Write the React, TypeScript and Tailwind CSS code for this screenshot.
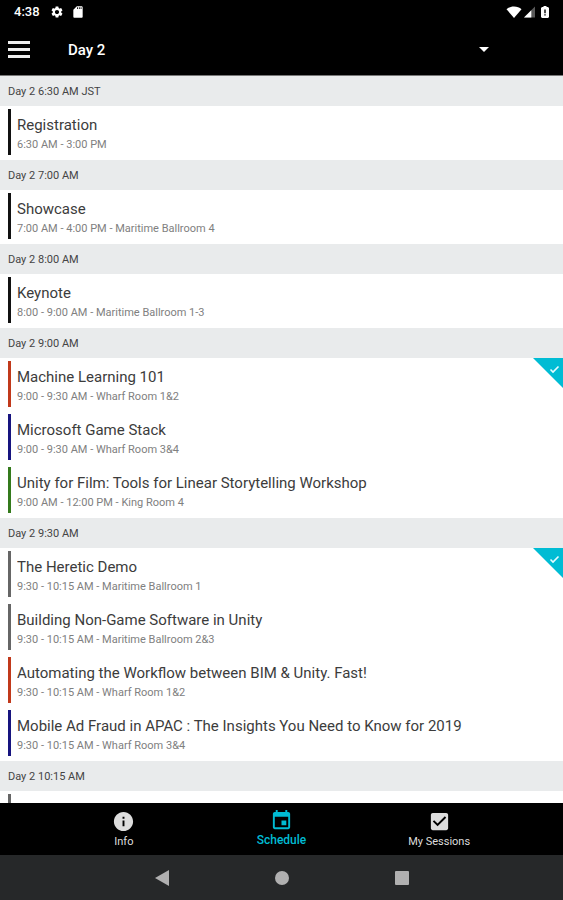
import { useState } from 'react';

type Session = { title: string; detail: string; bar: string; saved?: boolean };
type Slot = { time: string; sessions: Session[] };

const slots: Slot[] = [
  {
    time: 'Day 2 6:30 AM JST',
    sessions: [{ title: 'Registration', detail: '6:30 AM - 3:00 PM', bar: 'bg-[#111111]' }],
  },
  {
    time: 'Day 2 7:00 AM',
    sessions: [{ title: 'Showcase', detail: '7:00 AM - 4:00 PM - Maritime Ballroom 4', bar: 'bg-[#111111]' }],
  },
  {
    time: 'Day 2 8:00 AM',
    sessions: [{ title: 'Keynote', detail: '8:00 - 9:00 AM - Maritime Ballroom 1-3', bar: 'bg-[#111111]' }],
  },
  {
    time: 'Day 2 9:00 AM',
    sessions: [
      { title: 'Machine Learning 101', detail: '9:00 - 9:30 AM - Wharf Room 1&2', bar: 'bg-[#c1391b]', saved: true },
      { title: 'Microsoft Game Stack', detail: '9:00 - 9:30 AM - Wharf Room 3&4', bar: 'bg-[#17147f]' },
      {
        title: 'Unity for Film: Tools for Linear Storytelling Workshop',
        detail: '9:00 AM - 12:00 PM - King Room 4',
        bar: 'bg-[#347a1c]',
      },
    ],
  },
  {
    time: 'Day 2 9:30 AM',
    sessions: [
      { title: 'The Heretic Demo', detail: '9:30 - 10:15 AM - Maritime Ballroom 1', bar: 'bg-[#666666]', saved: true },
      { title: 'Building Non-Game Software in Unity', detail: '9:30 - 10:15 AM - Maritime Ballroom 2&3', bar: 'bg-[#666666]' },
      {
        title: 'Automating the Workflow between BIM & Unity. Fast!',
        detail: '9:30 - 10:15 AM - Wharf Room 1&2',
        bar: 'bg-[#c1391b]',
      },
      {
        title: 'Mobile Ad Fraud in APAC : The Insights You Need to Know for 2019',
        detail: '9:30 - 10:15 AM - Wharf Room 3&4',
        bar: 'bg-[#17147f]',
      },
    ],
  },
  {
    time: 'Day 2 10:15 AM',
    sessions: [{ title: '', detail: '', bar: 'bg-[#666666]' }],
  },
];

function StatusBar() {
  return (
    <div className="flex h-6 shrink-0 items-center pr-3.5 pl-3.5 text-white">
      <span className="text-[13px] font-medium">4:38</span>
      <svg className="ml-2.5 size-3.5" viewBox="0 0 24 24" fill="currentColor" aria-hidden="true">
        <path d="M19.14 12.94c.04-.3.06-.61.06-.94 0-.32-.02-.64-.07-.94l2.03-1.58a.49.49 0 0 0 .12-.61l-1.92-3.32a.488.488 0 0 0-.59-.22l-2.39.96c-.5-.38-1.03-.7-1.62-.94l-.36-2.54a.484.484 0 0 0-.48-.41h-3.84c-.24 0-.43.17-.47.41l-.36 2.54c-.59.24-1.13.57-1.62.94l-2.39-.96c-.22-.08-.47 0-.59.22L2.74 8.87c-.12.21-.08.47.12.61l2.03 1.58c-.05.3-.09.63-.09.94s.02.64.07.94l-2.03 1.58a.49.49 0 0 0-.12.61l1.92 3.32c.12.22.37.29.59.22l2.39-.96c.5.38 1.03.7 1.62.94l.36 2.54c.05.24.24.41.48.41h3.84c.24 0 .44-.17.47-.41l.36-2.54c.59-.24 1.13-.56 1.62-.94l2.39.96c.22.08.47 0 .59-.22l1.92-3.32c.12-.22.07-.47-.12-.61l-2.01-1.58zM12 15.6c-1.98 0-3.6-1.62-3.6-3.6s1.62-3.6 3.6-3.6 3.6 1.62 3.6 3.6-1.62 3.6-3.6 3.6z" />
      </svg>
      <svg className="ml-[7px] size-3.5" viewBox="0 0 24 24" fill="currentColor" aria-hidden="true">
        <path d="M18 2h-8L4 8v12c0 1.100.9 2 2 2h12c1.100 0 2-.9 2-2V4c0-1.100-.9-2-2-2zm-6 5h-1.500V4H12v3zm3 0h-1.500V4H15v3zm3 0h-1.500V4H18v3z" />
      </svg>
      <svg className="ml-auto h-3 w-4" viewBox="0 0 16 12" fill="currentColor" aria-hidden="true">
        <path d="M8 12 .5 3.200C2.500 1.300 5 .4 8 .4s5.500.9 7.500 2.800z" />
      </svg>
      <svg className="ml-0.5 h-3 w-[11px]" viewBox="0 0 12 12" fill="currentColor" aria-hidden="true">
        <path d="M0 12 12 0v12z" opacity=".35" />
        <path d="M0 12 8 4v8z" />
      </svg>
      <svg className="ml-1.5 h-3 w-2" viewBox="0 0 8 12" fill="currentColor" aria-hidden="true">
        <path fillRule="evenodd" d="M2.500 0h3v1H7l1 1v9l-1 1H1l-1-1V2l1-1h1.500zM3.300 3.500v3.700h1.400V3.500zM3.300 8.200v1.400h1.400V8.200z" />
      </svg>
    </div>
  );
}

function AppBar() {
  return (
    <header className="flex h-[51px] shrink-0 items-center pr-[72px] pl-2 text-white">
      <button type="button" aria-label="Open menu" className="flex w-[22px] flex-col gap-1">
        <span className="h-[3px] bg-[#eeeeee]" />
        <span className="h-[3px] bg-[#eeeeee]" />
        <span className="h-[3px] bg-[#eeeeee]" />
      </button>
      <div className="ml-[38px] grid flex-1 items-center">
        <select
          aria-label="Day"
          defaultValue="Day 2"
          className="col-start-1 row-start-1 h-8 appearance-none bg-black pt-0.5 text-[15px] font-medium"
        >
          <option>Day 2</option>
        </select>
        <svg
          className="pointer-events-none col-start-1 row-start-1 mr-0.5 h-[5px] w-2.5 justify-self-end"
          viewBox="0 0 10 5"
          fill="currentColor"
          aria-hidden="true"
        >
          <path d="M0 0h10L5 5z" />
        </svg>
      </div>
    </header>
  );
}

function SessionRow({ session }: { session: Session }) {
  return (
    <li className="relative flex h-[53px] gap-1.5 pt-[3px] pb-1 pl-2">
      <span className={`w-[3px] ${session.bar}`} />
      <div className="min-w-0 flex-1 pt-1.5">
        <h3 className="truncate text-[15px] leading-5 font-normal text-[#3c3c3c]">{session.title}</h3>
        <p className="truncate text-[11px] leading-5 font-normal text-[#808080]">{session.detail}</p>
      </div>
      {session.saved && (
        <svg className="absolute top-0 right-0 size-[30px]" viewBox="0 0 30 30" role="img" aria-label="Saved">
          <path d="M0 0h30v30z" fill="#00bcd4" />
          <path d="m17.500 11.500 2.500 2.500L25.500 8.500" fill="none" stroke="#e6fbff" strokeWidth="1.600" />
        </svg>
      )}
    </li>
  );
}

const tabs = [
  {
    name: 'Info',
    icon: 'M12 2C6.480 2 2 6.480 2 12s4.480 10 10 10 10-4.480 10-10S17.520 2 12 2zm1 15h-2v-6h2v6zm0-8h-2V7h2v2z',
  },
  {
    name: 'Schedule',
    icon: 'M17 12h-5v5h5v-5zM16 1v2H8V1H6v2H5c-1.110 0-1.990.9-1.990 2L3 19c0 1.100.890 2 2 2h14c1.100 0 2-.9 2-2V5c0-1.100-.9-2-2-2h-1V1h-2zm3 18H5V8h14v11z',
  },
  {
    name: 'My Sessions',
    icon: 'M19 3H5c-1.110 0-2 .9-2 2v14c0 1.100.890 2 2 2h14c1.110 0 2-.9 2-2V5c0-1.100-.890-2-2-2zm-9 14l-5-5 1.410-1.410L10 14.170l7.590-7.590L19 8l-9 9z',
  },
];

function TabBar() {
  const [active, setActive] = useState('Schedule');
  return (
    <nav className="flex h-[52px] shrink-0 justify-center bg-black">
      {tabs.map((tab) => {
        const on = tab.name === active;
        return (
          <button
            key={tab.name}
            type="button"
            aria-current={on ? 'page' : undefined}
            onClick={() => setActive(tab.name)}
            className={`flex w-[28%] flex-col items-center ${on ? 'pt-1.5 text-[#00bcd4]' : 'pt-[7px] text-[#dddddd]'}`}
          >
            <svg className="size-[23px]" viewBox="0 0 24 24" fill="currentColor" aria-hidden="true">
              <path d={tab.icon} />
            </svg>
            <span className={on ? 'text-xs leading-4 font-medium' : 'text-[11px] leading-[18px]'}>{tab.name}</span>
          </button>
        );
      })}
    </nav>
  );
}

function SystemBar() {
  return (
    <div className="flex h-[45px] shrink-0 justify-center bg-[#262829] text-[#b0b0b0]">
      <button type="button" aria-label="Back" className="flex w-[120px] items-center justify-center">
        <svg className="h-4 w-3.5" viewBox="0 0 14 16" fill="currentColor" aria-hidden="true">
          <path d="M14 0v16L0 8z" />
        </svg>
      </button>
      <button type="button" aria-label="Home" className="flex w-[120px] items-center justify-center">
        <span className="size-3.5 rounded-full bg-current" />
      </button>
      <button type="button" aria-label="Recent apps" className="flex w-[120px] items-center justify-center">
        <span className="size-3.5 rounded-[1px] bg-current" />
      </button>
    </div>
  );
}

export default function App() {
  return (
    <div className="flex h-screen flex-col bg-black font-[Roboto,'Liberation_Sans',sans-serif]">
      <StatusBar />
      <AppBar />
      <main className="min-h-0 flex-1 overflow-y-auto border-t border-[#777777] bg-white [scrollbar-width:none]">
        {slots.map((slot) => (
          <section key={slot.time}>
            <h2 className="bg-[#e9ebec] pt-0.5 pl-2 text-[11px] leading-7 font-normal text-[#444444]">{slot.time}</h2>
            <ul className="pb-px">
              {slot.sessions.map((session) => (
                <SessionRow key={session.title} session={session} />
              ))}
            </ul>
          </section>
        ))}
      </main>
      <TabBar />
      <SystemBar />
    </div>
  );
}
